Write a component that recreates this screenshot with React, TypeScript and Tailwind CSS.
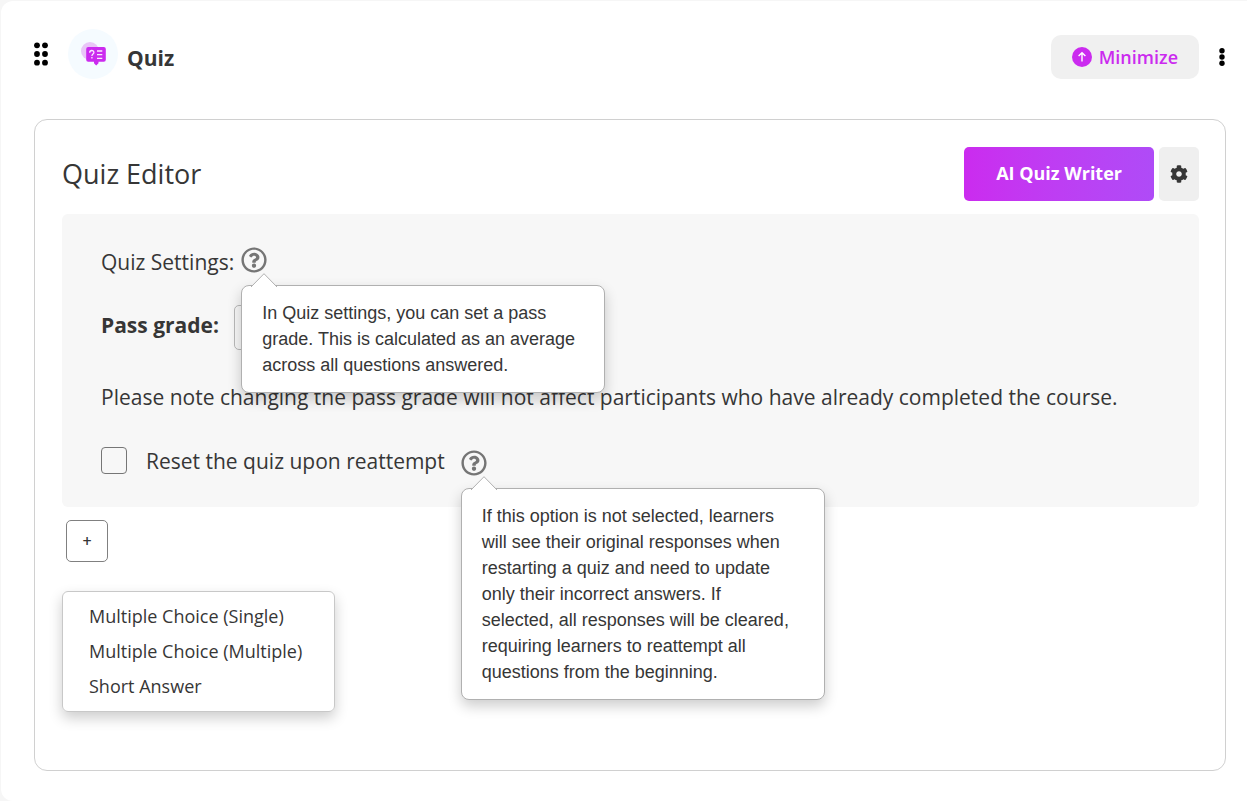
import type { ReactNode } from 'react';
import { FaCog, FaRegQuestionCircle } from 'react-icons/fa';

const questionTypes = ['Multiple Choice (Single)', 'Multiple Choice (Multiple)', 'Short Answer'];

function DragDots() {
  return (
    <svg width="16" height="26" viewBox="0 0 16 26" aria-hidden="true">
      {[4.3, 13, 21.7].map((y) => (
        <g key={y}>
          <circle cx="3" cy={y} r="2.9" />
          <circle cx="11" cy={y} r="2.9" />
        </g>
      ))}
    </svg>
  );
}

function KebabDots() {
  return (
    <svg width="6" height="20" viewBox="0 0 6 20" aria-hidden="true">
      {[3.7, 10, 16.3].map((y) => (
        <circle key={y} cx="3" cy={y} r="2.7" />
      ))}
    </svg>
  );
}

function QuizLogo() {
  return (
    <svg width="50" height="50" viewBox="0 0 50 50" aria-hidden="true">
      <circle cx="25" cy="25" r="25" fill="#f5fbff" />
      <circle cx="22" cy="22" r="9" fill="#e9c6f8" />
      <path
        d="M20.200 18h15.600a2 2 0 0 1 2 2v10.800a2 2 0 0 1-2 2H30.500v1.400L28.200 36.400 26 34.200V32.800h-5.800a2 2 0 0 1-2-2V20a2 2 0 0 1 2-2z"
        fill="#cb2bef"
      />
      <path
        d="M21.700 23.700c0-3 4.300-2.800 4.200-.2 0 1.500-2 1.700-2 3.400M23.900 28v1.400M29 22h5.300M29 25.700h5.300M29 29.400h5.300"
        fill="none"
        stroke="#fbe9ff"
        strokeWidth="1.300"
      />
    </svg>
  );
}

function ArrowUpCircle() {
  return (
    <svg width="20" height="20" viewBox="0 0 20 20" aria-hidden="true">
      <circle cx="10" cy="10" r="10" fill="#cb2bef" />
      <path d="M10 14.500V6M6.600 9.100 10 5.700l3.400 3.400" fill="none" stroke="#fff" strokeWidth="1.400" />
    </svg>
  );
}

// Help icon with its popover, anchored under the icon
function HelpTip({ id, label, children }: { id: string; label: string; children: ReactNode }) {
  return (
    <span className="relative flex">
      <button type="button" aria-label={label} aria-describedby={id} className="text-[#757575]">
        <FaRegQuestionCircle size={26} />
      </button>
      <span
        id={id}
        role="tooltip"
        className="absolute left-0 top-[38px] z-10 w-[364px] rounded-lg border border-[#b0b0b0] bg-white py-[14px] pl-5 pr-7 font-['Liberation_Sans',Arial,sans-serif] text-[18px] leading-[26px] shadow-[0_6px_14px_rgba(0,0,0,0.2)]"
      >
        <svg className="absolute -top-[13px] left-2" width="28" height="14" viewBox="0 0 28 14" aria-hidden="true">
          <path d="M1 14 14 .7 27 14" fill="#fff" stroke="#b0b0b0" />
        </svg>
        {children}
      </span>
    </span>
  );
}

export default function App() {
  return (
    <div className="min-h-screen bg-[#f6f6f6] pl-px pt-px font-['Open_Sans',sans-serif] text-[#363636]">
      <main className="min-h-[800px] rounded-l-xl bg-white pb-[30px] pl-[33px] pr-[21px] pt-7">
        <header className="flex items-start pr-px">
          <button type="button" aria-label="Reorder" className="mt-3 text-black">
            <DragDots />
          </button>
          <div className="ml-[18px]">
            <QuizLogo />
          </div>
          <h1 className="ml-[9px] mt-[13px] text-[21px] font-bold leading-8">Quiz</h1>
          <button
            type="button"
            className="ml-auto mt-[6px] flex h-11 items-center gap-[7px] rounded-[10px] bg-[#f0f0f0] px-[21px] text-[18px] font-semibold text-[#cb2bef]"
          >
            <ArrowUpCircle />
            Minimize
          </button>
          <button type="button" aria-label="More options" className="ml-5 mt-[18px] text-black">
            <KebabDots />
          </button>
        </header>

        <section className="mt-10 min-h-[652px] rounded-[13px] border border-[#d0d0d0] pl-[27px] pr-[26px] pt-[27px]">
          <div className="flex items-center">
            <h2 className="text-[27px] leading-9">Quiz Editor</h2>
            <button
              type="button"
              className="ml-auto h-[54px] rounded-[5px] bg-linear-to-r from-[#cb2bef] to-[#af4bf7] px-8 pb-[2px] text-[18px] font-bold text-white"
            >
              AI Quiz Writer
            </button>
            <button
              type="button"
              aria-label="Quiz settings"
              className="ml-[5px] flex h-[54px] w-10 items-center justify-center rounded-[5px] bg-[#efefef]"
            >
              <FaCog size={18} />
            </button>
          </div>

          <div className="mt-[13px] rounded-md bg-[#f7f7f7] px-[39px] pb-8 pt-[33px] text-[21px] leading-7">
            <div className="flex items-start gap-[7px]">
              <h3 className="pt-px">Quiz Settings:</h3>
              <HelpTip id="settings-tip" label="About quiz settings">
                In Quiz settings, you can set a pass grade. This is calculated as an average across all questions
                answered.
              </HelpTip>
            </div>
            <div className="mt-[29px] flex items-center gap-[15px]">
              <label htmlFor="pass-grade" className="pb-[5px] font-bold">
                Pass grade:
              </label>
              <input
                id="pass-grade"
                type="text"
                className="h-[45px] w-[120px] rounded-[5px] border border-[#b8b8b8] bg-[#f7f7f7] px-3"
              />
            </div>
            <p className="mt-[33px]">
              Please note changing the pass grade will not affect participants who have already completed the course.
            </p>
            <div className="mt-9 flex items-start">
              <input
                id="reset-quiz"
                type="checkbox"
                className="h-[27px] w-[26px] appearance-none rounded border border-[#767676] bg-[#f7f7f7]"
              />
              <label htmlFor="reset-quiz" className="ml-[19px] mr-4">
                Reset the quiz upon reattempt
              </label>
              <div className="-mb-1 mt-[3px]">
                <HelpTip id="reset-tip" label="About resetting the quiz">
                  If this option is not selected, learners will see their original responses when restarting a quiz
                  and need to update only their incorrect answers. If selected, all responses will be cleared,
                  requiring learners to reattempt all questions from the beginning.
                </HelpTip>
              </div>
            </div>
          </div>

          <button
            type="button"
            aria-label="Add question"
            className="ml-1 mt-[13px] flex h-[42px] w-[42px] items-center justify-center rounded-[5px] border border-[#808080] text-[16px] font-semibold"
          >
            +
          </button>

          <ul className="mt-[29px] w-[273px] rounded-md border border-[#c8c8c8] py-[7px] shadow-[0_6px_14px_rgba(0,0,0,0.2)]">
            {questionTypes.map((type) => (
              <li key={type}>
                <button type="button" className="w-full px-[26px] text-left text-[18px] leading-[35px]">
                  {type}
                </button>
              </li>
            ))}
          </ul>
        </section>
      </main>
    </div>
  );
}
